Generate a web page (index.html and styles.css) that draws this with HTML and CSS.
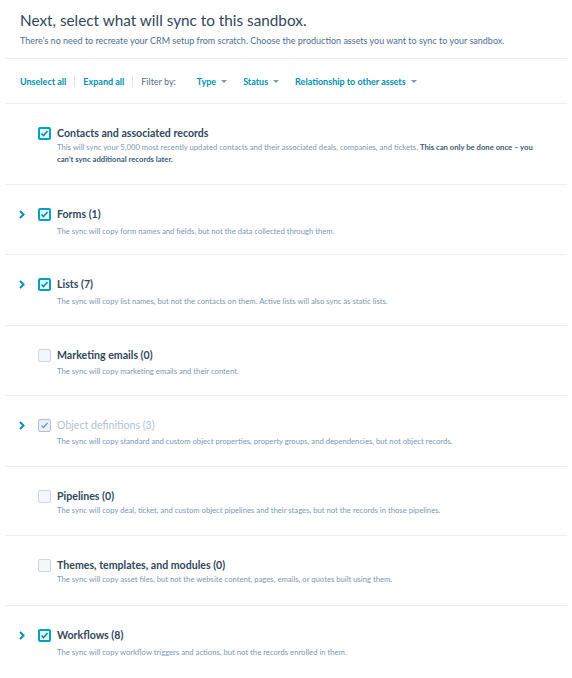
FILE: index.html
```html
<!DOCTYPE html>
<html lang="en">
<head>
    <meta charset="UTF-8">
    <title>Sync to sandbox</title>
    <link rel="stylesheet" href="styles.css">
</head>
<body>

    <div id="sync">
        <!--header-->
        <div class="head">
            <h1>Next, select what will sync to this sandbox.</h1>
            <p>There’s no need to recreate your CRM setup from scratch. Choose the production assets you want to sync to your sandbox.</p>
        </div>

        <!--toolbar-->
        <div class="bar">
            <a class="link">Unselect all</a>
            <span class="sep"></span>
            <a class="link">Expand all</a>
            <span class="sep"></span>
            <span class="label">Filter by:</span>
            <a class="link drop">Type <i class="caret"></i></a>
            <a class="link drop">Status <i class="caret"></i></a>
            <a class="link drop">Relationship to other assets <i class="caret"></i></a>
        </div>

        <!--rows-->
        <ul class="list">
            <li class="row first">
                <span class="arrow"></span>
                <span class="box on"></span>
                <div class="text">
                    <h3>Contacts and associated records</h3>
                    <p>This will sync your 5,000 most recently updated contacts and their associated deals, companies, and tickets. <b>This can only be done once – you can’t sync additional records later.</b></p>
                </div>
            </li>
            <li class="row loose">
                <span class="arrow show"></span>
                <span class="box on"></span>
                <div class="text">
                    <h3>Forms (1)</h3>
                    <p>The sync will copy form names and fields, but not the data collected through them.</p>
                </div>
            </li>
            <li class="row loose">
                <span class="arrow show"></span>
                <span class="box on"></span>
                <div class="text">
                    <h3>Lists (7)</h3>
                    <p>The sync will copy list names, but not the contacts on them. Active lists will also sync as static lists.</p>
                </div>
            </li>
            <li class="row mid">
                <span class="arrow"></span>
                <span class="box"></span>
                <div class="text">
                    <h3>Marketing emails (0)</h3>
                    <p>The sync will copy marketing emails and their content.</p>
                </div>
            </li>
            <li class="row mid off">
                <span class="arrow show"></span>
                <span class="box on"></span>
                <div class="text">
                    <h3>Object definitions (3)</h3>
                    <p>The sync will copy standard and custom object properties, property groups, and dependencies, but not object records.</p>
                </div>
            </li>
            <li class="row">
                <span class="arrow"></span>
                <span class="box"></span>
                <div class="text">
                    <h3>Pipelines (0)</h3>
                    <p>The sync will copy deal, ticket, and custom object pipelines and their stages, but not the records in those pipelines.</p>
                </div>
            </li>
            <li class="row">
                <span class="arrow"></span>
                <span class="box"></span>
                <div class="text">
                    <h3>Themes, templates, and modules (0)</h3>
                    <p>The sync will copy asset files, but not the website content, pages, emails, or quotes built using them.</p>
                </div>
            </li>
            <li class="row loose">
                <span class="arrow show"></span>
                <span class="box on"></span>
                <div class="text">
                    <h3>Workflows (8)</h3>
                    <p>The sync will copy workflow triggers and actions, but not the records enrolled in them.</p>
                </div>
            </li>
        </ul>
    </div>

</body>
</html>
```

FILE: styles.css
```css
*{margin:0;padding:0;box-sizing:border-box;}
li{list-style: none}

body{
    background: #fff;
    font-family: Lato, "Open Sans", sans-serif;
    color: #33475b;
}

#sync{
    margin: 0 5px;
}

/*header*/
#sync div.head{
    padding: 9px 15px 11px;
    border-bottom: 1px solid #eaf0f6;
}
#sync div.head h1{
    font-size: 15.3px;
    line-height: 22px;
    font-weight: 400;
    color: #33475b;
}
#sync div.head p{
    margin-top: 4px;
    font-size: 9px;
    line-height: 12px;
    color: #516f90;
}

/*toolbar*/
#sync div.bar{
    display: flex;
    align-items: center;
    height: 45px;
    padding-left: 15px;
    border-bottom: 1px solid #eaf0f6;
    font-size: 9px;
}
#sync div.bar .link{
    color: #0091ae;
    font-weight: 700;
    cursor: pointer;
}
#sync div.bar .sep{
    width: 1px;
    height: 12px;
    margin: 0 8px;
    background-color: #dfe3eb;
}
#sync div.bar .label{
    color: #516f90;
    margin-right: 21px;
}
#sync div.bar .drop{
    display: flex;
    align-items: center;
    margin-right: 16px;
}
#sync div.bar .caret{
    width: 0;
    height: 0;
    margin-left: 5px;
    border-left: 3px solid transparent;
    border-right: 3px solid transparent;
    border-top: 3px solid #7c98b6;
}

/*rows*/
#sync ul.list li.row{
    display: flex;
    align-items: flex-start;
    padding: 21px 0 19.5px 14px;
    border-bottom: 1px solid #eaf0f6;
}
#sync ul.list li.row.first{
    padding-bottom: 18.5px;
}
#sync ul.list li.row:last-child{
    border-bottom: none;
}
#sync ul.list li.row .arrow{
    width: 6px;
    height: 9px;
    margin-top: 4px;
    margin-right: 13px;
}
#sync ul.list li.row .arrow.show{
    background: url("data:image/svg+xml,%3Csvg xmlns='http://www.w3.org/2000/svg' viewBox='0 0 6 9'%3E%3Cpath d='M1 1l3.5 3.5L1 8' fill='none' stroke='%230091ae' stroke-width='2'/%3E%3C/svg%3E") no-repeat;
}
#sync ul.list li.row .box{
    flex: none;
    width: 13px;
    height: 13px;
    margin-top: 2px;
    margin-right: 6px;
    border: 1px solid #cbd6e2;
    border-radius: 2px;
    background-color: #f5f8fa;
}
#sync ul.list li.row .box.on{
    border: 2px solid #00a4bd;
    background: #e5f8fb url("data:image/svg+xml,%3Csvg xmlns='http://www.w3.org/2000/svg' viewBox='0 0 9 9'%3E%3Cpath d='M1.5 4.5l2 2 4-4.5' fill='none' stroke='%230091ae' stroke-width='1.6'/%3E%3C/svg%3E") no-repeat center/9px 9px;
}
#sync ul.list li.row .text{
    flex: 1;
    padding-right: 30px;
}
#sync ul.list li.row h3{
    font-size: 10.6px;
    line-height: 16px;
    font-weight: 700;
    color: #33475b;
}
#sync ul.list li.row p{
    margin-top: 0;
    font-size: 7.7px;
    line-height: 12px;
    color: #7c98b6;
}
#sync ul.list li.row p b{
    color: #425b76;
}
#sync ul.list li.row.mid p{
    margin-top: 2px;
}
#sync ul.list li.row.mid{
    padding-bottom: 18.5px;
}
#sync ul.list li.row.loose p{
    margin-top: 3px;
}
#sync ul.list li.row.loose{
    padding-bottom: 17.5px;
}

/*disabled*/
#sync ul.list li.row.off h3{
    color: #b0c1d4;
    font-weight: 400;
}
#sync ul.list li.row.off .box.on{
    border: 1px solid #b0c1d4;
    background: #eaf0f6 url("data:image/svg+xml,%3Csvg xmlns='http://www.w3.org/2000/svg' viewBox='0 0 9 9'%3E%3Cpath d='M1.5 4.5l2 2 4-4.5' fill='none' stroke='%237c98b6' stroke-width='1.4'/%3E%3C/svg%3E") no-repeat center/9px 9px;
}
```
